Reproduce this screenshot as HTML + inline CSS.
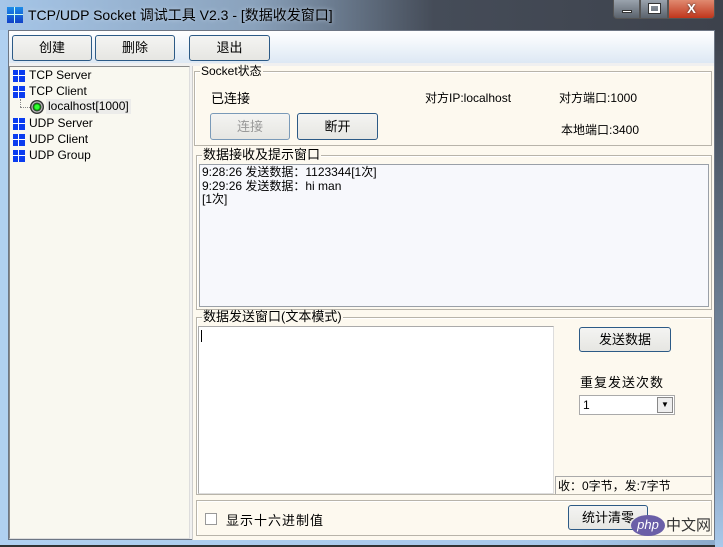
<!DOCTYPE html>
<html><head><meta charset="utf-8"><style>
*{box-sizing:border-box;margin:0;padding:0}
body{width:723px;height:547px;overflow:hidden;position:relative;font-family:"Liberation Sans","Noto Sans CJK SC",sans-serif;font-size:12px;color:#000;background:linear-gradient(90deg,#a6c6e8 0%,#8aa2bc 35%,#454c58 60%,#3d424c 100%)}
.a{position:absolute}
.btn{position:absolute;border:1px solid #2c5a86;border-radius:3px;background:linear-gradient(#f4f4f2,#e6e6e2);text-align:center;font-size:13px;line-height:22px}
.grp{position:absolute;border:1px solid #b8b4aa;box-shadow:inset 1px 1px #fff}
.lg{position:absolute;top:-8px;left:5px;background:#fdf9ef;padding:0 1px;font-size:12px;line-height:14px}
.ic{position:absolute;width:12px;height:12px;background:linear-gradient(90deg,transparent 5px,#fff 5px,#fff 6px,transparent 6px),linear-gradient(transparent 5px,#fff 5px,#fff 6px,transparent 6px),#0a3cf0}
.ti{position:absolute;left:29px;font-size:12px}
</style></head><body>
<div class="a" style="left:0;top:30px;width:8px;height:517px;background:#b0d0f0"></div>
<div class="a" style="left:0;top:539px;width:723px;height:8px;background:linear-gradient(90deg,#b0d0f0 0%,#a8c8ea 80%,#8aa8c8 100%);border-bottom:2px solid #333"></div>
<div class="a" style="left:715px;top:30px;width:8px;height:517px;background:linear-gradient(#3d424c,#7a90a8 70%,#a8c8ea)"></div>
<div class="a" style="left:7px;top:7px;width:16px;height:16px;background:linear-gradient(90deg,transparent 7px,#cfe 7px,#cfe 8px,transparent 8px),linear-gradient(transparent 7px,#cfe 7px,#cfe 8px,transparent 8px),linear-gradient(#1c8ce8,#1040c8)"></div>
<div class="a" style="left:28px;top:5px;font-size:14px;color:#000;text-shadow:0 0 4px #c8d8ea">TCP/UDP Socket 调试工具 V2.3 - [数据收发窗口]</div>
<div class="a" style="left:613px;top:0;width:27px;height:19px;border:1px solid #555;border-top:0;border-radius:0 0 0 4px;background:linear-gradient(#9aa3ad,#5a626c)"><div class="a" style="left:8px;top:10px;width:10px;height:3px;background:#fff;border:1px solid #333"></div></div>
<div class="a" style="left:640px;top:0;width:28px;height:19px;border:1px solid #555;border-top:0;background:linear-gradient(#9aa3ad,#5a626c)"><div class="a" style="left:8px;top:4px;width:11px;height:9px;border:2px solid #fff;outline:1px solid #333"></div></div>
<div class="a" style="left:668px;top:0;width:47px;height:19px;border:1px solid #555;border-top:0;border-radius:0 0 4px 0;background:linear-gradient(#e08a70,#c0361c);color:#fff;font-weight:bold;text-align:center;font-size:13px;line-height:17px;text-shadow:0 0 2px #333">X</div>
<div class="a" style="left:8px;top:30px;width:707px;height:510px;background:#f0f0f0;border:1px solid #6d7684"></div>
<div class="a" style="left:9px;top:31px;width:705px;height:32px;background:linear-gradient(#fff,#dde8f4)"></div>
<div class="btn" style="left:12px;top:35px;width:80px;height:26px;line-height:24px">创建</div>
<div class="btn" style="left:95px;top:35px;width:80px;height:26px;line-height:24px">删除</div>
<div class="btn" style="left:189px;top:35px;width:81px;height:26px;line-height:24px">退出</div>
<div class="a" style="left:9px;top:66px;width:181px;height:473px;background:#f9f8f0;border:1px solid #8a8a8a;border-right-color:#ddd;border-bottom-color:#ddd"></div>
<div class="ic" style="left:13px;top:70px"></div><div class="ti" style="top:68px">TCP Server</div>
<div class="ic" style="left:13px;top:86px"></div><div class="ti" style="top:84px">TCP Client</div>
<div class="a" style="left:20px;top:99px;width:1px;height:8px;border-left:1px dotted #888"></div>
<div class="a" style="left:20px;top:107px;width:10px;border-top:1px dotted #888"></div>
<div class="a" style="left:30px;top:100px;width:14px;height:14px;border-radius:50%;background:radial-gradient(#3f3 0 2px,#0a0 3px,#333 4px,#ddd 5px,#333 6px)"></div>
<div class="a" style="left:46px;top:99px;padding:0 2px;background:#ececea;font-size:12px;line-height:15px">localhost[1000]</div>
<div class="ic" style="left:13px;top:118px"></div><div class="ti" style="top:116px">UDP Server</div>
<div class="ic" style="left:13px;top:134px"></div><div class="ti" style="top:132px">UDP Client</div>
<div class="ic" style="left:13px;top:150px"></div><div class="ti" style="top:148px">UDP Group</div>
<div class="a" style="left:192px;top:66px;width:522px;height:474px;background:#fdf9ef;border-left:1px solid #ccc"></div>
<div class="grp" style="left:194px;top:71px;width:518px;height:75px"><div class="lg">Socket状态</div></div>
<div class="a" style="left:211px;top:88px;font-size:13px">已连接</div>
<div class="a" style="left:425px;top:89px">对方IP:localhost</div>
<div class="a" style="left:559px;top:89px">对方端口:1000</div>
<div class="a" style="left:561px;top:121px">本地端口:3400</div>
<div class="btn" style="left:210px;top:113px;width:80px;height:27px;color:#999;border-color:#7a9ab8;line-height:25px">连接</div>
<div class="btn" style="left:297px;top:113px;width:81px;height:27px;line-height:25px">断开</div>
<div class="grp" style="left:196px;top:155px;width:516px;height:155px"><div class="lg" style="font-size:13px">数据接收及提示窗口</div></div>
<div class="a" style="left:199px;top:164px;width:510px;height:143px;background:#f7f8fc;border:1px solid #9aa0a8;padding:1px 2px;font-size:12px;line-height:13.5px">9:28:26 发送数据：1123344[1次]<br>9:29:26 发送数据：hi man<br>[1次]</div>
<div class="grp" style="left:196px;top:317px;width:516px;height:178px"><div class="lg" style="font-size:13px">数据发送窗口(文本模式)</div></div>
<div class="a" style="left:198px;top:326px;width:356px;height:168px;background:#fff;border:1px solid #aaa;border-right-color:#ddd;border-bottom-color:#ddd"></div>
<div class="a" style="left:201px;top:330px;width:1px;height:12px;background:#000"></div>
<div class="btn" style="left:579px;top:327px;width:92px;height:25px;line-height:23px">发送数据</div>
<div class="a" style="left:580px;top:372px;font-size:13px;letter-spacing:1px">重复发送次数</div>
<div class="a" style="left:579px;top:395px;width:96px;height:20px;background:#fff;border:1px solid #aaa;padding-left:3px;line-height:18px">1<div class="a" style="right:1px;top:1px;width:16px;height:16px;background:#eee;border:1px solid #888;font-size:8px;text-align:center;line-height:14px">▼</div></div>
<div class="a" style="left:555px;top:476px;width:157px;height:18px;border-top:1px solid #aaa;border-left:1px solid #aaa;padding-left:2px;font-size:12px;line-height:18px">收：0字节，发:7字节</div>
<div class="grp" style="left:196px;top:500px;width:516px;height:36px"></div>
<div class="a" style="left:205px;top:513px;width:12px;height:12px;background:#fff;border:1px solid #999"></div>
<div class="a" style="left:226px;top:510px;font-size:13px;letter-spacing:1px">显示十六进制值</div>
<div class="btn" style="left:568px;top:505px;width:80px;height:25px;line-height:23px">统计清零</div>
<div class="a" style="left:631px;top:515px;width:34px;height:21px;border-radius:50%;background:#6a5fa8;color:#fff;font-size:13px;text-align:center;line-height:20px;font-style:italic">php</div>
<div class="a" style="left:666px;top:514px;font-size:15px;color:#333">中文网</div>
</body></html>
